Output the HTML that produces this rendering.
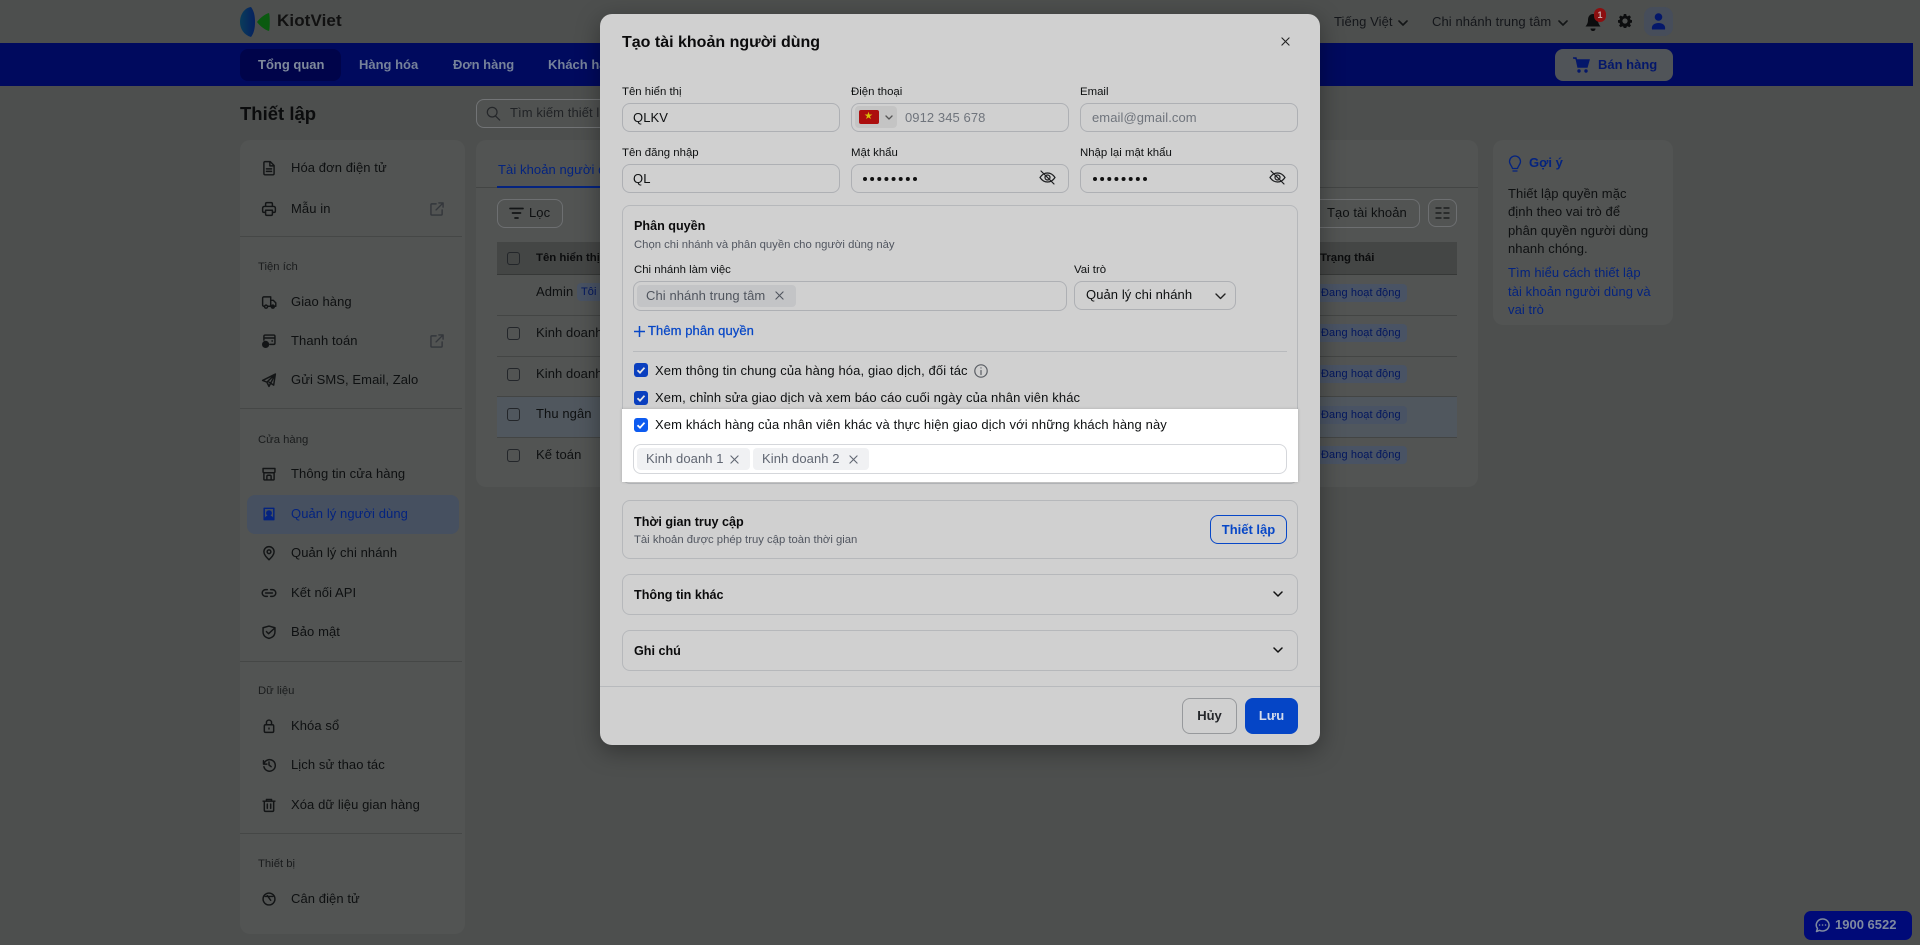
<!DOCTYPE html>
<html lang="vi"><head><meta charset="utf-8"><title>KiotViet</title>
<style>
*{box-sizing:border-box}
html,body{margin:0;padding:0;width:1920px;height:945px;overflow:hidden;background:#4d4f4e;font-family:"Liberation Sans",sans-serif;font-size:13px;letter-spacing:.08px;color:#0e1011}
.a{position:absolute}
.t{position:absolute;white-space:nowrap;line-height:20px;height:20px}
.b{font-weight:700}
.card{position:absolute;background:#525453;border-radius:10px}
.s{font-size:11.4px;letter-spacing:0;transform:translateY(1px)}
.h{font-size:12.6px;letter-spacing:0;color:#0b0b0c;font-weight:700;transform:translateY(1px)}
.in{position:absolute;border:1px solid #aeb0b4;border-radius:8px}
.ck{position:absolute;width:14px;height:14px;border-radius:3px;background:#0a3fbf}
.ck svg{position:absolute;left:1px;top:1px}
.cb{position:absolute;left:507px;width:13px;height:13px;border:1.5px solid #23262a;border-radius:3px}
.st{position:absolute;left:1300px;width:107px;height:18px;background:#495364;border-radius:4px;color:#03175e;font-size:11px;line-height:18px;padding-left:21px;letter-spacing:.1px;white-space:nowrap}
.i{position:absolute;fill:none;stroke:#131516;stroke-width:1.7;stroke-linecap:round;stroke-linejoin:round}
svg[width="18"]{transform:scale(.85)}
.d{position:absolute;left:240px;width:222px;height:1px;background:#454746}
.l{position:absolute;height:1px;left:497px;width:960px;background:#434544}
.sec{color:#1a1c1d;font-size:11.3px;letter-spacing:0}
.g{color:#515660}
.chip{position:absolute;background:#c3c4c6;border-radius:4px;height:22px;color:#50555e;line-height:22px;white-space:nowrap;padding-left:9px}
.drop{position:absolute;left:622px;width:676px;border:1px solid #b6b8bb;border-radius:8px}
.nv{font-weight:700;font-size:13px;letter-spacing:0}
</style></head><body>

<!-- top bar -->
<svg class="a" style="left:240px;top:7px" width="31" height="30" viewBox="0 0 31 30"><defs><linearGradient id="lg" x1="0" x2="1" y1="0" y2="0"><stop offset="0" stop-color="#0a3c5a"/><stop offset="1" stop-color="#05205f"/></linearGradient></defs><path d="M11 0C4 1 0 8 0 15s4 13 11 15c3-4 4-9 4-15S14 4 11 0z" fill="url(#lg)"/><path d="M29 6c-4 1-9 5-12 9 3 4 8 8 12 9 1-3 1-15 0-18z" fill="#0a5a10"/></svg>
<div class="t b" style="left:277px;top:11px;font-size:17px;letter-spacing:.1px;color:#111">KiotViet</div>

<div class="t" style="left:1334px;top:12px;color:#14161a">Tiếng Việt</div>
<svg class="i" style="left:1398px;top:20px;stroke-width:1.6" width="10" height="6" viewBox="0 0 10 6"><path d="M1 1l4 4 4-4"/></svg>
<div class="t" style="left:1432px;top:12px;color:#14161a">Chi nhánh trung tâm</div>
<svg class="i" style="left:1558px;top:20px;stroke-width:1.6" width="10" height="6" viewBox="0 0 10 6"><path d="M1 1l4 4 4-4"/></svg>
<svg class="a" style="left:1585px;top:12px" width="16" height="20" viewBox="0 0 16 20"><path d="M8 2c-3.500 0-5 3-5 6 0 3-1 4.500-2.500 6.500h15C14 12.500 13 11 13 8c0-3-1.500-6-5-6z" fill="#0c0d0e"/><path d="M5.500 16.500h5c0 1.500-1 2.500-2.500 2.500s-2.500-1-2.500-2.500z" fill="#0c0d0e"/></svg>
<div class="a" style="left:1594px;top:8px;width:12px;height:14px;border-radius:7px;background:#8c0f10;color:#c9a9a9;font-size:9px;line-height:14px;text-align:center;letter-spacing:0;font-weight:700">1</div>
<svg class="a" style="left:1618px;top:14px" width="14" height="14" viewBox="0 0 24 24"><path fill="#0c0d0e" fill-rule="evenodd" d="M10 1h4l.7 3.200 1.900.8 2.800-1.700 2.800 2.800L20.500 9l.8 1.900 3.200.7v4l-3.200.7-.8 1.900 1.700 2.800-2.800 2.800-2.800-1.700-1.900.8-.7 3.100h-4l-.7-3.100-1.900-.8-2.800 1.700-2.800-2.800L3.500 18.300l-.8-1.900-3.200-.7v-4l3.200-.7.800-1.900-1.700-2.800 2.800-2.800 2.800 1.700 1.900-.8zM12 8.500a4.500 4.500 0 1 0 0 9 4.500 4.500 0 0 0 0-9z" transform="translate(0 -1)"/></svg>
<div class="a" style="left:1644px;top:7px;width:29px;height:29px;border-radius:9px;background:#464d5a"></div>
<svg class="a" style="left:1651px;top:13px" width="15" height="17" viewBox="0 0 15 17"><circle cx="7.500" cy="4" r="3.800" fill="#04176a"/><path d="M1 16.500c-.800-4 2-6.500 6.500-6.500s7.300 2.500 6.500 6.500z" fill="#04176a"/></svg>

<!-- nav -->
<div class="a" style="left:0;top:43px;width:1913px;height:43px;background:#000a5e"></div>
<div class="a" style="left:240px;top:49px;width:101px;height:32px;border-radius:8px;background:#00044a"></div>
<div class="t nv" style="left:258px;top:55px;color:#7f8a9c">Tổng quan</div>
<div class="t nv" style="left:359px;top:55px;color:#76829a">Hàng hóa</div>
<div class="t nv" style="left:453px;top:55px;color:#76829a">Đơn hàng</div>
<div class="t nv" style="left:548px;top:55px;color:#76829a">Khách hàng</div>
<div class="a" style="left:1555px;top:49px;width:118px;height:32px;border-radius:8px;background:#505458"></div>
<svg class="a" style="left:1573px;top:57px" width="17" height="16" viewBox="0 0 17 16"><path d="M0 1h3l2 9h9l2-7H4" fill="#04176a" stroke="#04176a" stroke-width="1.400"/><circle cx="6" cy="14" r="1.700" fill="#04176a"/><circle cx="13" cy="14" r="1.700" fill="#04176a"/></svg>
<div class="t nv" style="left:1598px;top:55px;color:#04176a">Bán hàng</div>

<!-- heading + search -->
<div class="t b" style="left:240px;top:104px;font-size:18.5px;letter-spacing:0;color:#0b0c0d">Thiết lập</div>
<div class="a" style="left:476px;top:99px;width:200px;height:29px;border:1px solid #727476;border-radius:8px;background:#505251"></div>
<svg class="i" style="left:486px;top:106px;stroke:#25272a;stroke-width:1.400" width="15" height="15" viewBox="0 0 17 17"><circle cx="7" cy="7" r="5.500"/><path d="M11 11.500l4.500 4.500"/></svg>
<div class="t g" style="left:510px;top:103px;color:#212326">Tìm kiếm thiết lập</div>

<!-- sidebar -->
<div class="card" style="left:240px;top:140px;width:225px;height:794px"></div>
<div class="a" style="left:247px;top:495px;width:212px;height:39px;border-radius:8px;background:#465060"></div>

<svg class="i" style="left:260px;top:159px" width="18" height="18" viewBox="0 0 18 18"><path d="M4 1.500h6.500L15 6v9.500a1.500 1.500 0 0 1-1.500 1.500h-9A1.500 1.500 0 0 1 3 15.500V3a1.500 1.500 0 0 1 1-1.500zM10 2v4.500h4.500M6 10h6M6 13h6"/></svg>
<div class="t" style="left:291px;top:158px">Hóa đơn điện tử</div>
<svg class="i" style="left:260px;top:200px" width="18" height="18" viewBox="0 0 18 18"><path d="M5 6V3a1.500 1.500 0 0 1 1.500-1.500h5A1.500 1.500 0 0 1 13 3v3M4 13H3a1.500 1.500 0 0 1-1.500-1.500V8A2 2 0 0 1 3.500 6h11a2 2 0 0 1 2 2v3.500A1.500 1.500 0 0 1 15 13h-1M5 10.500h8V15a1.500 1.500 0 0 1-1.500 1.500h-5A1.500 1.500 0 0 1 5 15z"/></svg>
<div class="t" style="left:291px;top:199px">Mẫu in</div>
<svg class="i" style="left:430px;top:202px;stroke:#33363b;stroke-width:1.500" width="14" height="14" viewBox="0 0 15 15"><path d="M6.500 2H2a1 1 0 0 0-1 1v10a1 1 0 0 0 1 1h10a1 1 0 0 0 1-1V8.500M6.500 8.500L14 1M9.500 1H14v4.500"/></svg>
<div class="d" style="top:236px"></div>
<div class="t sec" style="left:258px;top:257px">Tiện ích</div>
<svg class="i" style="left:260px;top:293px" width="18" height="18" viewBox="0 0 18 18"><path d="M4 14H3a1.500 1.500 0 0 1-1.500-1.500v-8A1.500 1.500 0 0 1 3 3h8v11H7.500M11 7h3l3 3v4h-1"/><circle cx="5.500" cy="14.500" r="1.800"/><circle cx="13.500" cy="14.500" r="1.800" fill="#131516"/></svg>
<div class="t" style="left:291px;top:292px">Giao hàng</div>
<svg class="i" style="left:260px;top:332px" width="18" height="18" viewBox="0 0 18 18"><path d="M3 8V3.500A1.500 1.500 0 0 1 4.500 2h10A1.500 1.500 0 0 1 16 3.500v8a1.500 1.500 0 0 1-1.500 1.500H10M3 5.500h13M12.500 9h.5"/><circle cx="5" cy="13" r="3.400" fill="#131516"/></svg>
<div class="t" style="left:291px;top:331px">Thanh toán</div>
<svg class="i" style="left:430px;top:334px;stroke:#33363b;stroke-width:1.500" width="14" height="14" viewBox="0 0 15 15"><path d="M6.500 2H2a1 1 0 0 0-1 1v10a1 1 0 0 0 1 1h10a1 1 0 0 0 1-1V8.500M6.500 8.500L14 1M9.500 1H14v4.500"/></svg>
<svg class="i" style="left:260px;top:371px" width="18" height="18" viewBox="0 0 18 18"><path d="M16.500 2L1.500 9.500l5 2 2.500 5zM16.500 2L6.500 11.500M16.500 2l-2 13-5.500-3.500"/></svg>
<div class="t" style="left:291px;top:370px">Gửi SMS, Email, Zalo</div>
<div class="d" style="top:408px"></div>
<div class="t sec" style="left:258px;top:430px">Cửa hàng</div>
<svg class="i" style="left:260px;top:465px" width="18" height="18" viewBox="0 0 18 18"><path d="M2 2.500h14V6a1.500 1.500 0 0 1-1.500 1.500h-11A1.500 1.500 0 0 1 2 6zM3 7.500V15a1 1 0 0 0 1 1h10a1 1 0 0 0 1-1V7.500M6.500 16v-4a1.500 1.500 0 0 1 1.500-1.500h2a1.500 1.500 0 0 1 1.500 1.500v4"/></svg>
<div class="t" style="left:291px;top:464px">Thông tin cửa hàng</div>
<svg class="i" style="left:262px;top:507px;stroke:#04237f" width="14" height="14" viewBox="0 0 16 16"><path d="M2.500 1.500h11v13h-11z"/><circle cx="8" cy="7" r="2.500" fill="#04237f"/><path d="M3.500 14c.5-2.500 2-3.500 4.500-3.500s4 1 4.500 3.500z" fill="#04237f"/></svg>
<div class="t" style="left:291px;top:504px;color:#04237f">Quản lý người dùng</div>
<svg class="i" style="left:260px;top:544px" width="18" height="18" viewBox="0 0 18 18"><path d="M9 17c-3-3-6-6-6-9.500a6 6 0 0 1 12 0C15 11 12 14 9 17z"/><circle cx="9" cy="7.500" r="2.200"/></svg>
<div class="t" style="left:291px;top:543px">Quản lý chi nhánh</div>
<svg class="i" style="left:260px;top:584px" width="18" height="18" viewBox="0 0 18 18"><path d="M7 5H5a4 4 0 0 0 0 8h2M11 5h2a4 4 0 0 1 0 8h-2M5 9h8"/></svg>
<div class="t" style="left:291px;top:583px">Kết nối API</div>
<svg class="i" style="left:260px;top:623px" width="18" height="18" viewBox="0 0 18 18"><path d="M9 2l7 2v5c0 4-3 6.500-7 7.500C5 15.500 2 13 2 9V4zM6 8.500l2.500 2.500L15 5"/></svg>
<div class="t" style="left:291px;top:622px">Bảo mật</div>
<div class="d" style="top:661px"></div>
<div class="t sec" style="left:258px;top:681px">Dữ liệu</div>
<svg class="i" style="left:260px;top:717px" width="18" height="18" viewBox="0 0 18 18"><rect x="3.500" y="7.500" width="11" height="9" rx="1.500"/><path d="M6 7.500V5a3 3 0 0 1 6 0v2.500M9 11.500v1"/></svg>
<div class="t" style="left:291px;top:716px">Khóa sổ</div>
<svg class="i" style="left:260px;top:756px" width="18" height="18" viewBox="0 0 18 18"><path d="M2.500 4v4h4M3 8a6.800 6.800 0 1 1 0 3M9 5.500V9l2.500 2"/></svg>
<div class="t" style="left:291px;top:755px">Lịch sử thao tác</div>
<svg class="i" style="left:260px;top:796px" width="18" height="18" viewBox="0 0 18 18"><path d="M2 4.500h14M6 4V2.500h6V4M3.500 4.500h11V15a1.500 1.500 0 0 1-1.500 1.500H5A1.500 1.500 0 0 1 3.500 15zM7 8v5M11 8v5"/></svg>
<div class="t" style="left:291px;top:795px">Xóa dữ liệu gian hàng</div>
<div class="d" style="top:833px"></div>
<div class="t sec" style="left:258px;top:854px">Thiết bị</div>
<svg class="i" style="left:260px;top:890px" width="18" height="18" viewBox="0 0 18 18"><circle cx="9" cy="9" r="7"/><path d="M4.500 6h9M7 5l4 5.500"/></svg>
<div class="t" style="left:291px;top:889px">Cân điện tử</div>

<!-- main card -->
<div class="card" style="left:476px;top:140px;width:1002px;height:347px"></div>
<div class="t" style="left:498px;top:160px;color:#04237f">Tài khoản người dùng</div>
<div class="a" style="left:476px;top:187px;width:1002px;height:1px;background:#434544"></div>
<div class="a" style="left:497px;top:186px;width:110px;height:2px;background:#04237f"></div>
<div class="a" style="left:497px;top:199px;width:66px;height:29px;border:1px solid #6d6f71;border-radius:8px"></div>
<svg class="i" style="left:509px;top:206px" width="15" height="15" viewBox="0 0 15 15"><path d="M1 2.500h13M3.500 7h8M6 12h3"/></svg>
<div class="t" style="left:529px;top:203px;color:#0e1011">Lọc</div>
<div class="a" style="left:1300px;top:199px;width:120px;height:29px;border:1px solid #6d6f71;border-radius:8px"></div>
<div class="t" style="left:1327px;top:203px;color:#0e1011">Tạo tài khoản</div>
<div class="a" style="left:1428px;top:199px;width:29px;height:28px;border:1px solid #6d6f71;border-radius:8px"></div>
<svg class="i" style="left:1435px;top:206px;stroke-width:1.300" width="15" height="14" viewBox="0 0 15 14"><path d="M1 2h5M9 2h5M1 7h5M9 7h5M1 12h5M9 12h5"/></svg>
<div class="a" style="left:497px;top:242px;width:960px;height:33px;background:#444645;border-bottom:1px solid #363837"></div>
<div class="cb" style="top:252px"></div>
<div class="t b s" style="left:536px;top:247px;color:#0b0c0d">Tên hiển thị</div>
<div class="t b s" style="left:1320px;top:247px;color:#0b0c0d">Trạng thái</div>
<div class="t" style="left:536px;top:282px">Admin</div>
<div class="a" style="left:577px;top:283px;width:40px;height:18px;background:#495364;border-radius:4px;color:#03175e;font-size:11px;line-height:18px;padding-left:4px">Tôi</div>
<div class="l" style="top:315px"></div>
<div class="cb" style="top:327px"></div>
<div class="t" style="left:536px;top:323px">Kinh doanh 1</div>
<div class="l" style="top:356px"></div>
<div class="cb" style="top:368px"></div>
<div class="t" style="left:536px;top:364px">Kinh doanh 2</div>
<div class="a" style="left:497px;top:397px;width:960px;height:40px;background:#50575e"></div>
<div class="l" style="top:396px"></div>
<div class="cb" style="top:408px"></div>
<div class="t" style="left:536px;top:404px">Thu ngân</div>
<div class="l" style="top:437px"></div>
<div class="cb" style="top:449px"></div>
<div class="t" style="left:536px;top:445px">Kế toán</div>
<div class="st" style="top:284px">Đang hoạt động</div>
<div class="st" style="top:324px">Đang hoạt động</div>
<div class="st" style="top:365px">Đang hoạt động</div>
<div class="st" style="top:406px">Đang hoạt động</div>
<div class="st" style="top:446px">Đang hoạt động</div>

<!-- tip card -->
<div class="card" style="left:1493px;top:140px;width:180px;height:185px"></div>
<svg class="i" style="left:1508px;top:155px;stroke:#04237f;stroke-width:1.300" width="14" height="18" viewBox="0 0 14 18"><path d="M7 1a5.500 5.500 0 0 0-5.500 5.500c0 3 2.500 4.500 3 7h5c.5-2.500 3-4 3-7A5.500 5.500 0 0 0 7 1zM5 16h4"/></svg>
<div class="t nv" style="left:1529px;top:153px;color:#04237f">Gợi ý</div>
<div class="t" style="left:1508px;top:184px">Thiết lập quyền mặc</div>
<div class="t" style="left:1508px;top:202px">định theo vai trò để</div>
<div class="t" style="left:1508px;top:221px">phân quyền người dùng</div>
<div class="t" style="left:1508px;top:239px">nhanh chóng.</div>
<div class="t" style="left:1508px;top:263px;color:#04237f">Tìm hiểu cách thiết lập</div>
<div class="t" style="left:1508px;top:282px;color:#04237f">tài khoản người dùng và</div>
<div class="t" style="left:1508px;top:300px;color:#04237f">vai trò</div>

<!-- phone pill -->
<div class="a" style="left:1804px;top:911px;width:108px;height:29px;border-radius:7px;background:#000a78"></div>
<svg class="i" style="left:1815px;top:918px;stroke:#7f8aa0;stroke-width:1.500" width="15" height="15" viewBox="0 0 15 15"><path d="M7.500 1a6.500 6 0 1 1-3 11.300L1.500 13.500l1-3A6.500 6 0 0 1 7.500 1zM4.500 7h.1M7.500 7h.1M10.500 7h.1"/></svg>
<div class="t nv" style="left:1835px;top:915px;color:#7f8aa0">1900 6522</div>

<!-- modal -->
<div class="a" style="left:600px;top:14px;width:720px;height:731px;border-radius:12px;background:#d0d0d0;box-shadow:0 6px 24px rgba(0,0,0,.35)"></div>
<div class="t b" style="left:622px;top:33px;font-size:16px;letter-spacing:0;color:#0b0b0c">Tạo tài khoản người dùng</div>
<svg class="i" style="left:1281px;top:37px;stroke:#222;stroke-width:1.200" width="9" height="9" viewBox="0 0 10 10"><path d="M1 1l8 8M9 1l-8 8"/></svg>

<div class="t s" style="left:622px;top:81px">Tên hiển thị</div>
<div class="t s" style="left:851px;top:81px">Điện thoại</div>
<div class="t s" style="left:1080px;top:81px">Email</div>
<div class="in" style="left:622px;top:103px;width:218px;height:29px"></div>
<div class="in" style="left:851px;top:103px;width:218px;height:29px"></div>
<div class="in" style="left:1080px;top:103px;width:218px;height:29px"></div>
<div class="t" style="left:633px;top:108px">QLKV</div>
<div class="a" style="left:855px;top:106px;width:42px;height:22px;background:#c4c4c4;border-radius:4px"></div>
<div class="a" style="left:859px;top:110px;width:20px;height:14px;background:#ac0e0e;border-radius:2px"></div>
<div class="t" style="left:864px;top:107px;font-size:10px;color:#d9c00a;letter-spacing:0">★</div>
<svg class="i" style="left:885px;top:115px;stroke:#555;stroke-width:1.300" width="8" height="6" viewBox="0 0 8 6"><path d="M1 1l3 3 3-3"/></svg>
<div class="t" style="left:905px;top:108px;color:#6f747c">0912 345 678</div>
<div class="t" style="left:1092px;top:108px;color:#6f747c">email@gmail.com</div>

<div class="t s" style="left:622px;top:142px">Tên đăng nhập</div>
<div class="t s" style="left:851px;top:142px">Mật khẩu</div>
<div class="t s" style="left:1080px;top:142px">Nhập lại mật khẩu</div>
<div class="in" style="left:622px;top:164px;width:218px;height:29px"></div>
<div class="in" style="left:851px;top:164px;width:218px;height:29px"></div>
<div class="in" style="left:1080px;top:164px;width:218px;height:29px"></div>
<div class="t" style="left:633px;top:169px">QL</div>
<svg class="a" style="left:862px;top:176px" width="58" height="6" viewBox="0 0 58 6"><g fill="#111"><circle cx="3" cy="3" r="2"/><circle cx="10.140" cy="3" r="2"/><circle cx="17.280" cy="3" r="2"/><circle cx="24.420" cy="3" r="2"/><circle cx="31.560" cy="3" r="2"/><circle cx="38.700" cy="3" r="2"/><circle cx="45.840" cy="3" r="2"/><circle cx="53" cy="3" r="2"/></g></svg>
<svg class="a" style="left:1092px;top:176px" width="58" height="6" viewBox="0 0 58 6"><g fill="#111"><circle cx="3" cy="3" r="2"/><circle cx="10.140" cy="3" r="2"/><circle cx="17.280" cy="3" r="2"/><circle cx="24.420" cy="3" r="2"/><circle cx="31.560" cy="3" r="2"/><circle cx="38.700" cy="3" r="2"/><circle cx="45.840" cy="3" r="2"/><circle cx="53" cy="3" r="2"/></g></svg>
<svg class="i" style="left:1039px;top:169px;stroke:#1d1e20;stroke-width:1.200" width="17" height="17" viewBox="0 0 17 17"><path d="M1 8.500c2-3 4.500-4.500 7.500-4.500s5.500 1.500 7.500 4.500c-2 3-4.500 4.500-7.500 4.500S3 11.500 1 8.500z"/><circle cx="8.500" cy="8.500" r="2.500"/><path d="M2 2l13 13"/></svg>
<svg class="i" style="left:1269px;top:169px;stroke:#1d1e20;stroke-width:1.200" width="17" height="17" viewBox="0 0 17 17"><path d="M1 8.500c2-3 4.500-4.500 7.500-4.500s5.500 1.500 7.500 4.500c-2 3-4.500 4.500-7.500 4.500S3 11.500 1 8.500z"/><circle cx="8.500" cy="8.500" r="2.500"/><path d="M2 2l13 13"/></svg>

<!-- permissions -->
<div class="drop" style="top:205px;height:279px"></div>
<div class="t h" style="left:634px;top:215px">Phân quyền</div>
<div class="t s g" style="left:634px;top:234px;font-size:11.3px">Chọn chi nhánh và phân quyền cho người dùng này</div>
<div class="t s" style="left:634px;top:259px">Chi nhánh làm việc</div>
<div class="t s" style="left:1074px;top:259px">Vai trò</div>
<div class="in" style="left:633px;top:281px;width:434px;height:30px"></div>
<div class="chip" style="left:637px;top:285px;width:159px">Chi nhánh trung tâm</div>
<svg class="i" style="left:775px;top:291px;stroke:#50555e;stroke-width:1.200" width="9" height="9" viewBox="0 0 10 10"><path d="M1 1l8 8M9 1l-8 8"/></svg>
<div class="in" style="left:1074px;top:281px;width:162px;height:29px"></div>
<div class="t" style="left:1086px;top:285px">Quản lý chi nhánh</div>
<svg class="i" style="left:1215px;top:293px;stroke:#222;stroke-width:1.400" width="11" height="7" viewBox="0 0 11 7"><path d="M1 1l4.500 4.500L10 1"/></svg>
<svg class="i" style="left:634px;top:326px;stroke:#0747c7;stroke-width:1.500" width="11" height="11" viewBox="0 0 11 11"><path d="M5.500 0v11M0 5.500h11"/></svg>
<div class="t" style="left:648px;top:321px;color:#0747c7;-webkit-text-stroke:.25px #0747c7">Thêm phân quyền</div>
<div class="a" style="left:633px;top:351px;width:654px;height:1px;background:#b8babd"></div>

<div class="ck" style="left:634px;top:363px"><svg class="a" width="12" height="12" viewBox="0 0 12 12" fill="none" stroke="#e4e4e4" stroke-width="1.800"><path d="M2.500 6.200l2.500 2.500 4.500-5"/></svg></div>
<div class="t" style="left:655px;top:361px;letter-spacing:.12px">Xem thông tin chung của hàng hóa, giao dịch, đối tác</div>
<svg class="i" style="left:974px;top:364px;stroke:#595d63;stroke-width:1.200" width="14" height="14" viewBox="0 0 14 14"><circle cx="7" cy="7" r="6.200"/><path d="M7 6.500v4M7 3.800v.2"/></svg>
<div class="ck" style="left:634px;top:391px"><svg class="a" width="12" height="12" viewBox="0 0 12 12" fill="none" stroke="#e4e4e4" stroke-width="1.800"><path d="M2.500 6.200l2.500 2.500 4.500-5"/></svg></div>
<div class="t" style="left:655px;top:388px;letter-spacing:.12px">Xem, chỉnh sửa giao dịch và xem báo cáo cuối ngày của nhân viên khác</div>

<!-- highlight -->
<div class="a" style="left:622px;top:409px;width:676px;height:73px;background:#fff;box-shadow:0 0 3px rgba(0,0,0,.18)"></div>
<div class="ck" style="left:634px;top:418px;background:#0d5bf0"><svg class="a" width="12" height="12" viewBox="0 0 12 12" fill="none" stroke="#fff" stroke-width="1.800"><path d="M2.500 6.200l2.500 2.500 4.500-5"/></svg></div>
<div class="t" style="left:655px;top:415px;letter-spacing:.12px">Xem khách hàng của nhân viên khác và thực hiện giao dịch với những khách hàng này</div>
<div class="a" style="left:633px;top:444px;width:654px;height:30px;border:1px solid #d5d7db;border-radius:8px;background:#fff"></div>
<div class="chip" style="left:637px;top:448px;width:113px;background:#f0f1f3;color:#606672">Kinh doanh 1</div>
<svg class="i" style="left:730px;top:455px;stroke:#606672;stroke-width:1.200" width="9" height="9" viewBox="0 0 10 10"><path d="M1 1l8 8M9 1l-8 8"/></svg>
<div class="chip" style="left:753px;top:448px;width:116px;background:#f0f1f3;color:#606672">Kinh doanh 2</div>
<svg class="i" style="left:849px;top:455px;stroke:#606672;stroke-width:1.200" width="9" height="9" viewBox="0 0 10 10"><path d="M1 1l8 8M9 1l-8 8"/></svg>

<!-- access -->
<div class="drop" style="top:500px;height:59px"></div>
<div class="t h" style="left:634px;top:511px">Thời gian truy cập</div>
<div class="t s g" style="left:634px;top:529px;font-size:11.3px">Tài khoản được phép truy cập toàn thời gian</div>
<div class="a nv" style="left:1210px;top:515px;width:77px;height:29px;border:1.500px solid #0747c7;border-radius:8px;color:#0747c7;text-align:center;line-height:27px">Thiết lập</div>
<div class="drop" style="top:574px;height:41px"></div>
<div class="t h" style="left:634px;top:584px">Thông tin khác</div>
<svg class="i" style="left:1273px;top:591px;stroke:#111;stroke-width:1.500" width="10" height="7" viewBox="0 0 10 7"><path d="M1 1l4 4 4-4"/></svg>
<div class="drop" style="top:630px;height:41px"></div>
<div class="t h" style="left:634px;top:640px">Ghi chú</div>
<svg class="i" style="left:1273px;top:647px;stroke:#111;stroke-width:1.500" width="10" height="7" viewBox="0 0 10 7"><path d="M1 1l4 4 4-4"/></svg>
<div class="a" style="left:600px;top:686px;width:720px;height:1px;background:#b8babd"></div>
<div class="a nv" style="left:1182px;top:698px;width:55px;height:36px;border:1px solid #97999c;border-radius:8px;text-align:center;line-height:34px;color:#24262a">Hủy</div>
<div class="a nv" style="left:1245px;top:698px;width:53px;height:36px;border-radius:8px;background:#0545c6;text-align:center;line-height:36px;color:#d4dcec">Lưu</div>
</body></html>
